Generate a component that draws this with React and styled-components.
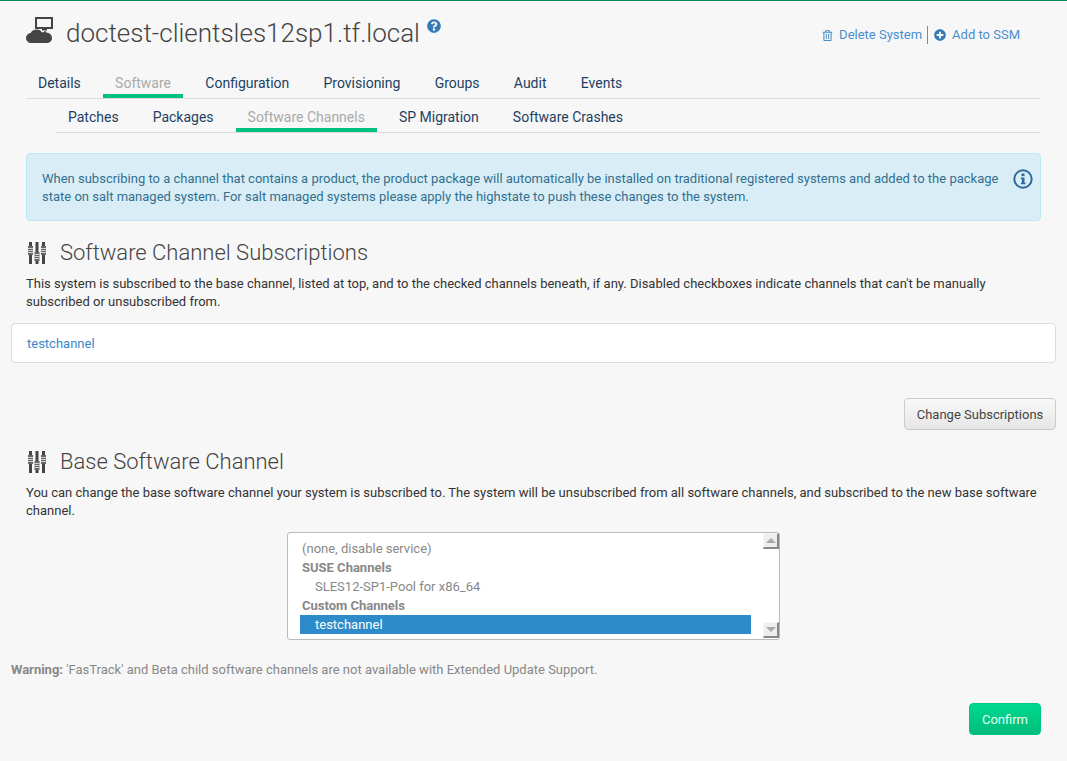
import React from 'react'
import styled, { createGlobalStyle } from 'styled-components'
import { FaQuestionCircle, FaRegTrashAlt, FaPlusCircle } from 'react-icons/fa'

const GlobalStyle = createGlobalStyle`
  html, body {
    margin: 0;
    padding: 0;
    background: #f7f7f7;
  }
  body {
    font-family: Roboto, "Liberation Sans", sans-serif;
    font-size: 13px;
    line-height: 18px;
    color: #333;
  }
`

const mainTabs = ['Details', 'Software', 'Configuration', 'Provisioning', 'Groups', 'Audit', 'Events']
const subTabs = ['Patches', 'Packages', 'Software Channels', 'SP Migration', 'Software Crashes']

function ServerCloudIcon() {
  return (
    <svg width="27" height="28" viewBox="0 0 27 28" fill="#444">
      <path d="M9 1h18v12H21v1.500h-5V13H9zm2 2v8h14V3z" fillRule="evenodd" />
      <path d="M11 13.500c2.300 0 4 1.200 4.800 2.800h2.400v-1h2v1.200c3.200.1 5.800 2.400 5.800 5.400 0 3.300-2.500 5.100-5.500 5.100H5.500C2.400 27 0 24.900 0 22c0-2.700 2-4.700 4.600-5.100 1-2.100 3.400-3.400 6.400-3.400z" />
    </svg>
  )
}

function SlidersIcon() {
  return (
    <svg width="18" height="22" viewBox="0 0 18 22" fill="#444">
      <rect x="1" y="0" width="3" height="22" />
      <rect x="7.500" y="0" width="3" height="22" />
      <rect x="14" y="0" width="3" height="22" />
      <rect x="0" y="4" width="5" height="9" fill="#666" />
      <rect x="6.500" y="10" width="5" height="9" fill="#666" />
      <rect x="13" y="4" width="5" height="9" fill="#666" />
      <path d="M0 6.500h5M0 8.500h5M0 10.500h5M6.500 12.500h5M6.500 14.500h5M6.500 16.500h5M13 6.500h5M13 8.500h5M13 10.500h5" stroke="#cfcfcf" />
    </svg>
  )
}

function InfoRingIcon() {
  return (
    <svg width="20" height="20" viewBox="0 0 20 20">
      <circle cx="10" cy="10" r="8.700" fill="none" stroke="#2c6a9c" strokeWidth="2" />
      <rect x="8.500" y="4.500" width="3" height="2.600" fill="#2c6a9c" />
      <path d="M7.800 8.500h3.700v5.200h1v1.500H7.800v-1.500h1v-3.700h-1z" fill="#2c6a9c" />
    </svg>
  )
}

export default function App() {
  return (
    <Page>
      <GlobalStyle />
      <Inset>
        <ToolbarHeader>
          <Title>
            <ServerCloudIcon />
            <TitleText>doctest-clientsles12sp1.tf.local</TitleText>
            <HelpMark><FaQuestionCircle size={14} /></HelpMark>
          </Title>
          <Actions>
            <ActionLink><FaRegTrashAlt size={11} />Delete System</ActionLink>
            <ActionLink $divided><FaPlusCircle size={12} color="#337ab7" />Add to SSM</ActionLink>
          </Actions>
        </ToolbarHeader>

        <TabRow>
          {mainTabs.map((tab) => (
            <Tab key={tab} $active={tab === 'Software'}>{tab}</Tab>
          ))}
        </TabRow>
        <SubTabRow>
          {subTabs.map((tab) => (
            <SubTab key={tab} $active={tab === 'Software Channels'}>{tab}</SubTab>
          ))}
        </SubTabRow>

        <Alert>
          <p>
            When subscribing to a channel that contains a product, the product package will automatically be installed on traditional registered systems and added to the package state on salt managed system. For salt managed systems please apply the highstate to push these changes to the system.
          </p>
          <InfoRingIcon />
        </Alert>

        <SectionHeading>
          <SlidersIcon />
          <h2>Software Channel Subscriptions</h2>
        </SectionHeading>
        <Para>
          This system is subscribed to the base channel, listed at top, and to the checked channels beneath, if any. Disabled checkboxes indicate channels that can't be manually subscribed or unsubscribed from.
        </Para>
      </Inset>

      <Panel><a>testchannel</a></Panel>

      <ButtonRow>
        <GreyButton>Change Subscriptions</GreyButton>
      </ButtonRow>

      <Inset>
        <SectionHeading $tight>
          <SlidersIcon />
          <h2>Base Software Channel</h2>
        </SectionHeading>
        <Para>
          You can change the base software channel your system is subscribed to. The system will be unsubscribed from all software channels, and subscribed to the new base software channel.
        </Para>
      </Inset>

      <ListBox>
        <ListRows>
          <ListItem $flush>(none, disable service)</ListItem>
          <ListGroup>SUSE Channels</ListGroup>
          <ListItem>SLES12-SP1-Pool for x86_64</ListItem>
          <ListGroup>Custom Channels</ListGroup>
          <ListItem $selected>testchannel</ListItem>
        </ListRows>
        <ScrollTrack>
          <ScrollButton $up />
          <ScrollButton />
        </ScrollTrack>
      </ListBox>

      <Warning><b>Warning:</b> 'FasTrack' and Beta child software channels are not available with Extended Update Support.</Warning>

      <ConfirmRow>
        <ConfirmButton>Confirm</ConfirmButton>
      </ConfirmRow>
    </Page>
  )
}

const Page = styled.div`
  box-sizing: border-box;
  height: 761px;
  overflow: hidden;
  padding: 0 11px;
  border-top: 1px solid #00875f;
`

const Inset = styled.div`
  padding: 0 15px;
`

const ToolbarHeader = styled.div`
  display: flex;
  justify-content: space-between;
  align-items: flex-start;
  height: 66px;
  padding-top: 15px;
  box-sizing: border-box;
`

const Title = styled.div`
  display: flex;
  align-items: flex-start;
`

const TitleText = styled.h1`
  margin: 0 0 0 13px;
  font-size: 26px;
  font-weight: 300;
  line-height: 34px;
  color: #444;
`

const HelpMark = styled.span`
  margin: 3px 0 0 7px;
  color: #337ab7;
`

const Actions = styled.div`
  display: flex;
  align-items: center;
  margin: 10px 21px 0 0;
`

const ActionLink = styled.a`
  display: flex;
  align-items: center;
  gap: 6px;
  color: #4a8fcf;
  height: 18px;
  ${(p) => p.$divided && 'margin-left: 5px; padding-left: 6px; border-left: 1px solid #888;'}
`

const TabRow = styled.div`
  display: flex;
  gap: 10.28px;
  height: 31px;
  border-bottom: 1px solid #ddd;
`

const Tab = styled.div`
  box-sizing: border-box;
  height: 31px;
  padding: 7px 12px 0;
  font-size: 14px;
  line-height: 18px;
  color: ${(p) => (p.$active ? '#aaa' : '#1d3f62')};
  border-bottom: ${(p) => (p.$active ? '4px solid #00c081' : '0')};
`

const SubTabRow = styled(TabRow)`
  gap: 10px;
  margin-left: 30px;
  height: 33px;
`

const SubTab = styled(Tab)`
  height: 33px;
  padding-top: 9px;
`

const Alert = styled.div`
  display: flex;
  align-items: center;
  gap: 12px;
  box-sizing: border-box;
  height: 68px;
  margin-top: 20px;
  padding: 1px 7px 0 15px;
  background: #d9edf7;
  border: 1px solid #bce8f1;
  border-radius: 4px;
  color: #31708f;
  p {
    margin: 0;
    flex: 1;
  }
  svg {
    align-self: flex-start;
    margin-top: 14px;
  }
`

const SectionHeading = styled.div`
  display: flex;
  align-items: center;
  gap: 14px;
  margin-top: 19px;
  padding-left: 2px;
  height: 26px;
  h2 {
    margin: 0;
    font-size: 22px;
    font-weight: 300;
    line-height: 26px;
    color: #444;
  }
`

const Para = styled.p`
  margin: 9px 0 0;
  color: #333;
`

const Panel = styled.div`
  box-sizing: border-box;
  height: 40px;
  margin-top: 12px;
  padding: 11px 15px;
  background: #fff;
  border: 1px solid #ddd;
  border-radius: 4px;
  a {
    color: #3a87c8;
  }
`

const ButtonRow = styled.div`
  display: flex;
  justify-content: flex-end;
  margin-top: 35px;
`

const GreyButton = styled.button`
  box-sizing: border-box;
  width: 152px;
  height: 32px;
  padding: 1px 0 0;
  font: inherit;
  color: #444;
  background: linear-gradient(#f9f9f9, #e6e6e6);
  border: 1px solid #ccc;
  border-radius: 4px;
`

const ListBox = styled.div`
  box-sizing: border-box;
  display: flex;
  justify-content: space-between;
  width: 493px;
  height: 108px;
  margin: 12px 0 0 276px;
  padding: 0 0 0 12px;
  background: #fff;
  border: 1px solid #bbb;
  border-radius: 3px;
`

const ListRows = styled.div`
  width: 451px;
  padding-top: 6px;
`

const ListItem = styled.div`
  height: 19px;
  line-height: 19px;
  padding-left: ${(p) => (p.$flush ? '2px' : '15px')};
  color: ${(p) => (p.$selected ? '#fff' : '#888')};
  background: ${(p) => (p.$selected ? '#2e8bc9' : 'transparent')};
`

const ListGroup = styled(ListItem)`
  padding-left: 2px;
  font-weight: 700;
`

const ScrollTrack = styled.div`
  display: flex;
  flex-direction: column;
  justify-content: space-between;
  width: 16px;
  padding-bottom: 1px;
`

const ScrollButton = styled.div`
  display: flex;
  align-items: center;
  justify-content: center;
  box-sizing: border-box;
  width: 16px;
  height: 16px;
  background: #eeeeea;
  border: 1px solid #f8f8f8;
  border-right: 2px solid #888;
  border-bottom: 2px solid #888;
  &::after {
    content: '';
    border-left: 5px solid transparent;
    border-right: 5px solid transparent;
    ${(p) => (p.$up ? 'border-bottom: 5px solid #aaa;' : 'border-top: 5px solid #aaa;')}
  }
`

const Warning = styled.p`
  margin: 21px 0 0;
  color: #888;
`

const ConfirmRow = styled.div`
  display: flex;
  justify-content: flex-end;
  margin-top: 24px;
  padding-right: 15px;
`

const ConfirmButton = styled.button`
  box-sizing: border-box;
  width: 72px;
  height: 32px;
  padding: 1px 0 0;
  font: inherit;
  color: #e8fff5;
  background: linear-gradient(#00d98f, #00bd7b);
  border: 1px solid #00c884;
  border-radius: 4px;
`
